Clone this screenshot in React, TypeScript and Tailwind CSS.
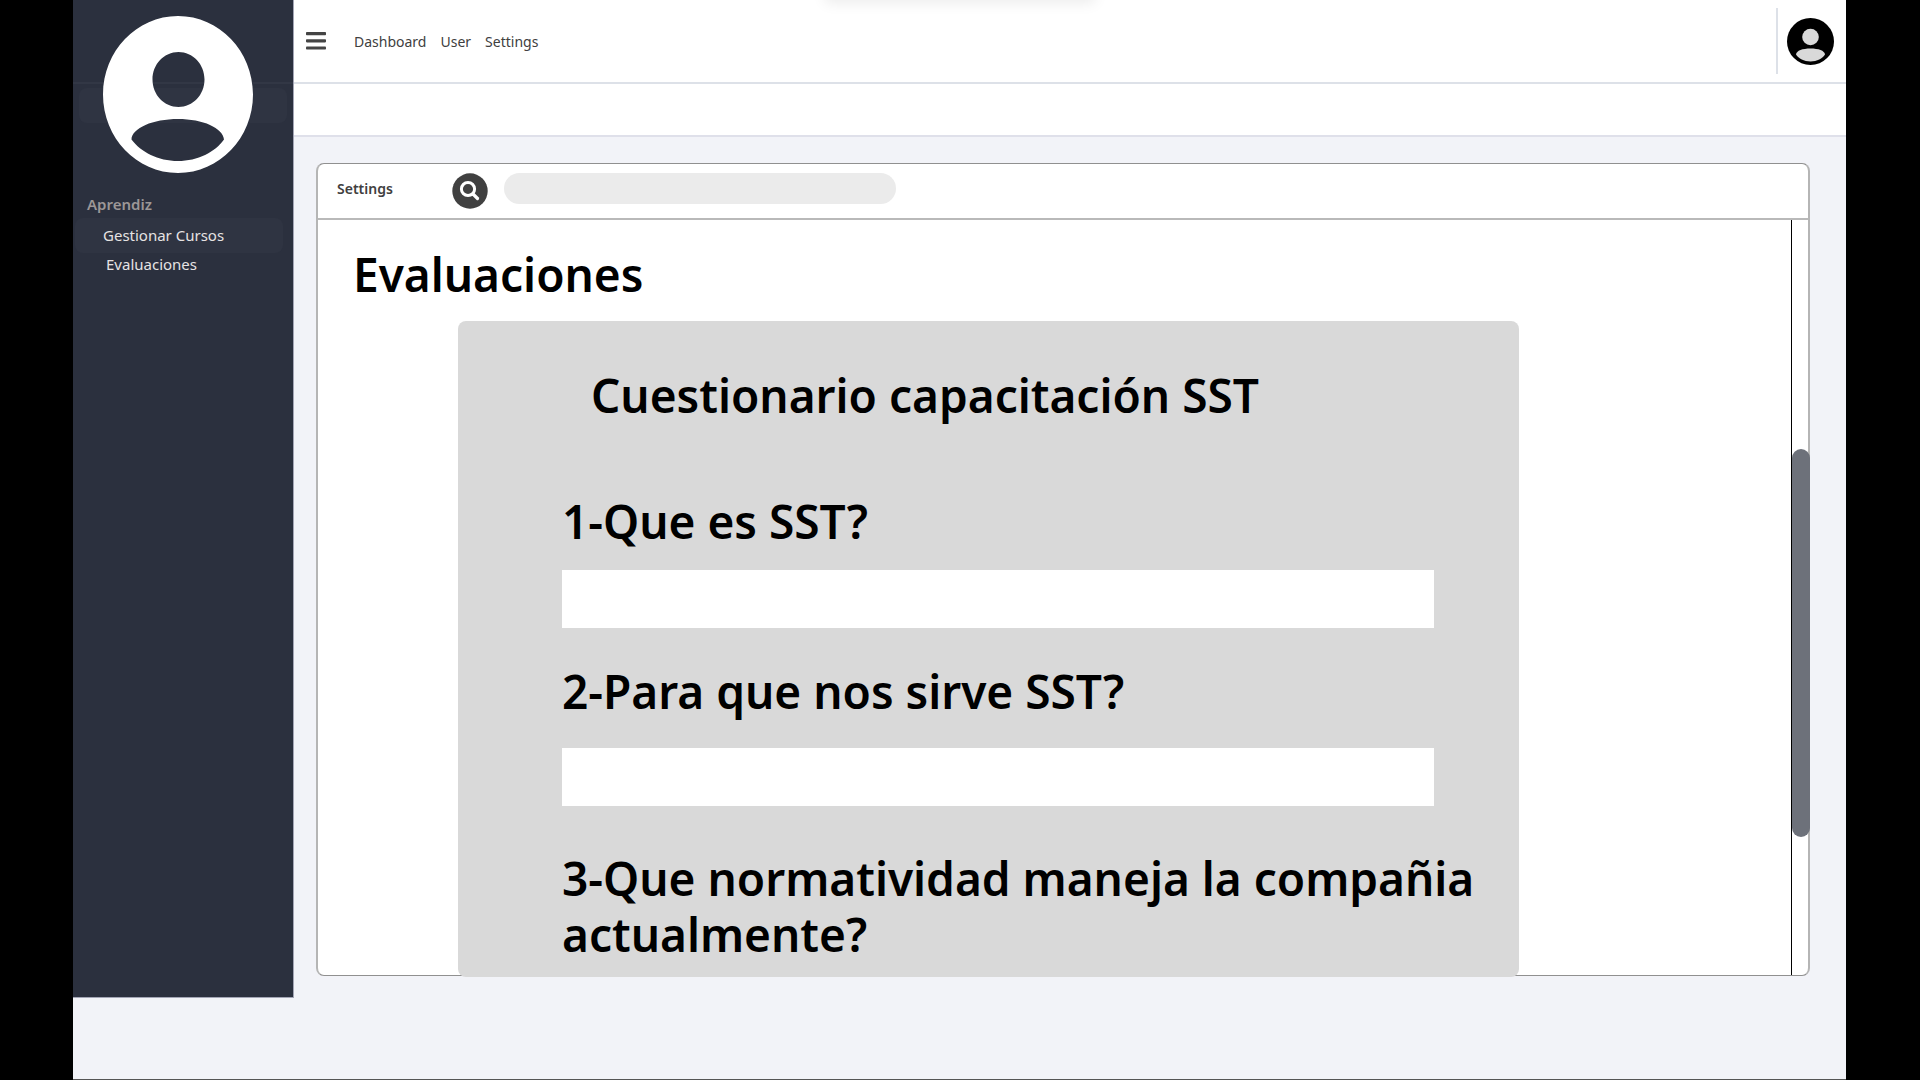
const navLinks = ['Dashboard', 'User', 'Settings'];

function ProfileIcon() {
  return (
    <svg viewBox="0 0 150 157" className="h-[157px] w-[150px]" aria-hidden="true">
      <path
        fill="#fff"
        fillRule="evenodd"
        d="M75 0C116.4 0 150 35.1 150 78.5S116.4 157 75 157 0 121.9 0 78.5 33.6 0 75 0ZM75.500 36C61.100 36 49.500 48.300 49.500 63.500S61.100 91 75.500 91s26-12.300 26-27.500S89.900 36 75.500 36ZM28.500 123.500C38 136 55 145 75 145s37-9 46-21.500C120 112 100 103 75 103s-46 9-46.500 20.500Z"
      />
    </svg>
  );
}

function AccountIcon() {
  return (
    <svg viewBox="0 0 47 47" className="size-[47px]" aria-hidden="true">
      <circle cx="23.500" cy="23.500" r="23.500" fill="#000" />
      <circle cx="23.500" cy="19" r="8.300" fill="#d9d9d9" />
      <path d="M9 36.500C9.500 32.500 15.500 30.500 23.500 30.500S37.500 32.500 38 36.500C35.500 40.500 30 43.500 23.500 43.500S11.500 40.500 9 36.500Z" fill="#d9d9d9" />
    </svg>
  );
}

function MenuIcon() {
  return (
    <svg viewBox="0 0 20 18" className="h-[18px] w-5" fill="#444" aria-hidden="true">
      <rect y="0" width="20" height="3.200" rx="0.800" />
      <rect y="7.200" width="20" height="3.200" rx="0.800" />
      <rect y="14.400" width="20" height="3.200" rx="0.800" />
    </svg>
  );
}

function SearchIcon() {
  return (
    <svg viewBox="0 0 36 36" className="size-9" aria-hidden="true">
      <circle cx="18" cy="18" r="17.700" fill="#404040" />
      <circle cx="16" cy="16" r="6.600" fill="none" stroke="#fff" strokeWidth="3" />
      <path d="M21 21l4.500 4.500" stroke="#fff" strokeWidth="3.200" strokeLinecap="round" />
    </svg>
  );
}

function Sidebar() {
  return (
    <aside className="relative mb-[81px] w-[221px] shrink-0 border-r border-b border-[#a3a5b5] bg-[#2b303e] text-[15px] leading-5">
      <div className="absolute inset-x-0 top-[82px] h-[2px] bg-[#323745]" />
      <div className="absolute inset-x-[6px] top-[88px] h-[35px] rounded-lg bg-[#2f3442]" />
      <div className="relative ml-[30px] pt-4">
        <ProfileIcon />
      </div>
      <h2 className="mt-[21px] ml-[14px] font-semibold text-[#9c9797]">Aprendiz</h2>
      <nav className="mt-1 mr-[10px] ml-[2px] text-[#e6e3e3]">
        <a href="#cursos" className="block rounded-lg bg-[#2f3442] pt-[7px] pb-2 pl-7">
          Gestionar Cursos
        </a>
        <a href="#evaluaciones" className="block pt-px pl-[31px]">
          Evaluaciones
        </a>
      </nav>
    </aside>
  );
}

function Header() {
  return (
    <header className="flex h-[84px] items-center border-b-2 border-[#dde1e8] bg-white pr-3 pl-3">
      <button type="button" aria-label="Menu">
        <MenuIcon />
      </button>
      <nav className="ml-7 flex gap-[14px] pt-[2px] text-[14px] leading-5 text-[#404040]">
        {navLinks.map((label) => (
          <a key={label} href={'#' + label.toLowerCase()}>
            {label}
          </a>
        ))}
      </nav>
      <div className="ml-auto flex items-center gap-[9px]">
        <div className="h-[66px] w-[2px] bg-[#dde1e8]" />
        <button type="button" aria-label="Account">
          <AccountIcon />
        </button>
      </div>
    </header>
  );
}

function Quiz() {
  return (
    <form className="-mb-[2px] mr-[272px] ml-[140px] rounded-lg bg-[#d9d9d9] pt-[46px] pr-5 pb-[15px] pl-[104px] text-[46px] leading-[56px] font-semibold">
      <h2 className="pl-[29px]">Cuestionario capacitación SST</h2>
      <label htmlFor="q1" className="mt-[70px] block">
        1-Que es SST?
      </label>
      <div className="mt-[21px] mr-[65px]">
        <input id="q1" type="text" className="block h-[58px] w-full bg-white px-4 text-2xl font-normal outline-none" />
      </div>
      <label htmlFor="q2" className="mt-[35px] block">
        2-Para que nos sirve SST?
      </label>
      <div className="mt-[29px] mr-[65px]">
        <input id="q2" type="text" className="block h-[58px] w-full bg-white px-4 text-2xl font-normal outline-none" />
      </div>
      <p className="mt-11">3-Que normatividad maneja la compañia actualmente?</p>
    </form>
  );
}

export default function App() {
  return (
    <div className="relative flex min-h-screen overflow-hidden bg-black pr-[74px] pl-[73px] font-['Noto_Sans',sans-serif] text-black">
      <div className="flex min-w-0 flex-1 border-b border-[#555] bg-[#f2f3f8]">
        <Sidebar />
        <div className="min-w-0 flex-1">
          <Header />
          <div className="h-[53px] border-b-2 border-[#dfe0ea] bg-white" />
          <main className="mt-[26px] mr-9 ml-[22px] rounded-lg border-x-2 border-y border-x-[#b5b5b5] border-y-[#909090] bg-white">
            <div className="flex h-[56px] items-start border-b-2 border-[#b9b9b9] pt-[9px] pl-[19px]">
              <label htmlFor="search" className="mt-[6px] w-[115px] text-[14px] leading-5 font-semibold text-[#404040]">
                Settings
              </label>
              <button type="button" aria-label="Search">
                <SearchIcon />
              </button>
              <input id="search" type="search" className="ml-4 h-[31px] w-[392px] rounded-full bg-[#ebebeb] px-4 text-[14px] outline-none" />
            </div>
            <div className="flex">
              <section className="min-w-0 flex-1">
                <h1 className="mt-[26px] mb-[19px] ml-[35px] text-[46px] leading-[56px] font-semibold">Evaluaciones</h1>
                <Quiz />
              </section>
              <div className="-mr-[2px] w-[19px] border-l border-black">
                <div className="mt-[229px] h-[388px] rounded-full bg-[#6d717a]" />
              </div>
            </div>
          </main>
        </div>
      </div>
      <div className="absolute -top-4 left-1/2 h-4 w-[264px] -translate-x-1/2 shadow-[0_0_14px_3px_rgba(0,0,0,0.08)]" />
    </div>
  );
}
